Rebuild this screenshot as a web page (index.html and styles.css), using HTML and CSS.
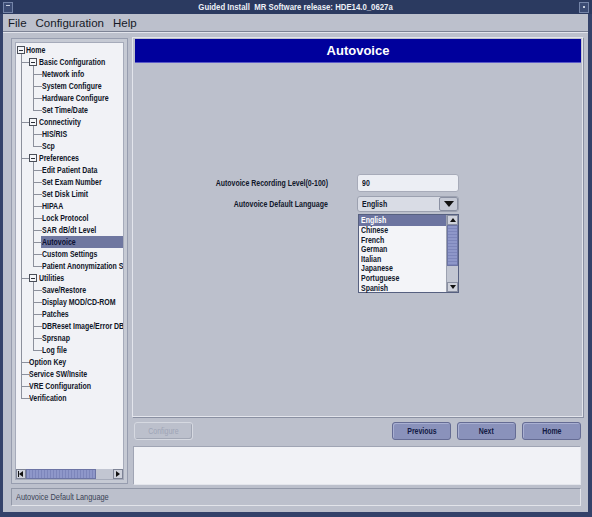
FILE: index.html
```html
<!DOCTYPE html>
<html>
<head>
<meta charset="utf-8">
<title>Guided Install</title>
<link rel="stylesheet" href="styles.css">
</head>
<body>
<div class="window">
  <div class="titlebar">
    <span class="tb-btn tb-menu"></span>
    <span class="tb-title"><span class="n n-c">Guided Install&nbsp; MR Software release: HDE14.0_0627a</span></span>
    <span class="tb-btn tb-max"></span>
  </div>
  <div class="frame">
    <div class="menubar">
      <span class="menu-item">File</span>
      <span class="menu-item">Configuration</span>
      <span class="menu-item">Help</span>
    </div>
    <div class="main">
      <div class="tree-panel">
        <div class="tree-inner">
          <div class="tree-scroll">
            <ul class="tree">
              <li class="root">
                <div class="row"><span class="box"></span><span class="label n">Home</span></div>
                <ul class="lvl1">
                  <li class="branch">
                    <div class="row"><span class="box"></span><span class="label n">Basic Configuration</span></div>
                    <ul class="lvl2">
                      <li><div class="row"><span class="label n">Network info</span></div></li>
                      <li><div class="row"><span class="label n">System Configure</span></div></li>
                      <li><div class="row"><span class="label n">Hardware Configure</span></div></li>
                      <li><div class="row"><span class="label n">Set Time/Date</span></div></li>
                    </ul>
                  </li>
                  <li class="branch">
                    <div class="row"><span class="box"></span><span class="label n">Connectivity</span></div>
                    <ul class="lvl2">
                      <li><div class="row"><span class="label n">HIS/RIS</span></div></li>
                      <li><div class="row"><span class="label n">Scp</span></div></li>
                    </ul>
                  </li>
                  <li class="branch">
                    <div class="row"><span class="box"></span><span class="label n">Preferences</span></div>
                    <ul class="lvl2">
                      <li><div class="row"><span class="label n">Edit Patient Data</span></div></li>
                      <li><div class="row"><span class="label n">Set Exam Number</span></div></li>
                      <li><div class="row"><span class="label n">Set Disk Limit</span></div></li>
                      <li><div class="row"><span class="label n">HIPAA</span></div></li>
                      <li><div class="row"><span class="label n">Lock Protocol</span></div></li>
                      <li><div class="row"><span class="label n">SAR dB/dt Level</span></div></li>
                      <li><div class="row selected"><span class="label n">Autovoice</span></div></li>
                      <li><div class="row"><span class="label n">Custom Settings</span></div></li>
                      <li><div class="row"><span class="label n">Patient Anonymization Settings</span></div></li>
                    </ul>
                  </li>
                  <li class="branch">
                    <div class="row"><span class="box"></span><span class="label n">Utilities</span></div>
                    <ul class="lvl2">
                      <li><div class="row"><span class="label n">Save/Restore</span></div></li>
                      <li><div class="row"><span class="label n">Display MOD/CD-ROM</span></div></li>
                      <li><div class="row"><span class="label n">Patches</span></div></li>
                      <li><div class="row"><span class="label n">DBReset Image/Error DB</span></div></li>
                      <li><div class="row"><span class="label n">Sprsnap</span></div></li>
                      <li><div class="row"><span class="label n">Log file</span></div></li>
                    </ul>
                  </li>
                  <li class="leaf"><div class="row"><span class="label n">Option Key</span></div></li>
                  <li class="leaf"><div class="row"><span class="label n">Service SW/Insite</span></div></li>
                  <li class="leaf"><div class="row"><span class="label n">VRE Configuration</span></div></li>
                  <li class="leaf"><div class="row"><span class="label n">Verification</span></div></li>
                </ul>
              </li>
            </ul>
          </div>
          <div class="hscroll">
            <span class="sb-btn"><span class="tri-left"></span></span>
            <span class="sb-thumb"></span>
            <span class="sb-track"></span>
            <span class="sb-btn"><span class="tri-right"></span></span>
          </div>
        </div>
      </div>
      <div class="right">
        <div class="content">
          <div class="header">Autovoice</div>
          <div class="form">
            <div class="form-row row-level">
              <span class="flabel"><span class="n n-r">Autovoice Recording Level(0-100)</span></span>
              <span class="input"><span class="n">90</span></span>
            </div>
            <div class="form-row row-lang">
              <span class="flabel"><span class="n n-r">Autovoice Default Language</span></span>
              <span class="combo-wrap">
                <span class="combo"><span class="combo-text"><span class="n">English</span></span><span class="combo-btn"><span class="tri-down"></span></span></span>
                <span class="popup">
                  <span class="popup-items">
                    <span class="opt sel"><span class="n">English</span></span>
                    <span class="opt"><span class="n">Chinese</span></span>
                    <span class="opt"><span class="n">French</span></span>
                    <span class="opt"><span class="n">German</span></span>
                    <span class="opt"><span class="n">Italian</span></span>
                    <span class="opt"><span class="n">Japanese</span></span>
                    <span class="opt"><span class="n">Portuguese</span></span>
                    <span class="opt"><span class="n">Spanish</span></span>
                  </span>
                  <span class="vscroll">
                    <span class="vs-btn"><span class="tri-up-s"></span></span>
                    <span class="vs-thumb"></span>
                    <span class="vs-track"></span>
                    <span class="vs-btn"><span class="tri-down-s"></span></span>
                  </span>
                </span>
              </span>
            </div>
          </div>
        </div>
        <div class="buttons">
          <span class="btn disabled"><span class="n n-c">Configure</span></span>
          <span class="spacer"></span>
          <span class="btn"><span class="n n-c">Previous</span></span>
          <span class="btn"><span class="n n-c">Next</span></span>
          <span class="btn"><span class="n n-c">Home</span></span>
        </div>
        <div class="message"></div>
      </div>
    </div>
    <div class="statusbar"><span class="n">Autovoice Default Language</span></div>
  </div>
</div>
</body>
</html>
```
FILE: styles.css
```css
* { box-sizing: border-box; }
html, body { margin: 0; padding: 0; }
body {
  width: 592px;
  height: 517px;
  overflow: hidden;
  font-family: "Liberation Sans", Arial, sans-serif;
  background: #2f3d62;
}
/* narrow text: the original UI uses a condensed Helvetica */
.n {
  display: inline-block;
  white-space: nowrap;
  transform: scaleX(0.82);
  transform-origin: left center;
}
.n-c { transform-origin: center center; }
.n-r { transform-origin: right center; }

.window {
  width: 592px;
  height: 517px;
  background: #34426a;
  padding-bottom: 5px;
}
.titlebar {
  height: 14px;
  display: flex;
  align-items: center;
  padding: 0 3px;
  background: #2b3a60;
}
.tb-btn {
  width: 10px;
  height: 11px;
  border: 1px solid #7484a8;
  background: #3c4c74;
  position: relative;
}
.tb-menu::after {
  content: '';
  position: absolute;
  left: 2px; top: 2px;
  width: 4px; height: 1px;
  background: #c8d0e0;
}
.tb-max::after {
  content: '';
  position: absolute;
  left: 3px; top: 3px;
  width: 2px; height: 2px;
  background: #c8d0e0;
}
.tb-title {
  flex: 1;
  display: flex;
  justify-content: center;
  color: #eef1f7;
  font-weight: bold;
  font-size: 9.5px;
  line-height: 14px;
}
.frame {
  margin: 0 4px 0 3px;
  height: 498px;
  background: #bcc0cc;
  display: flex;
  flex-direction: column;
}
.menubar {
  height: 18px;
  display: flex;
  align-items: center;
  gap: 9px;
  padding-left: 5px;
  border-bottom: 1px solid #7d8395;
  box-shadow: 0 1px 0 #e2e4ec;
  margin-bottom: 1px;
  font-size: 11.5px;
  color: #151926;
}
.main {
  height: 452px;
  display: flex;
  padding: 4px 0 0 8px;
  gap: 4px;
}
/* ---------- tree ---------- */
.tree-panel {
  width: 117px;
  height: 446px;
  margin-top: 1px;
  border: 1px solid #979daf;
  padding: 3px;
  background: #c6cad4;
}
.tree-inner {
  height: 100%;
  border: 1px solid #a6abba;
  background: #f1f2f6;
  display: flex;
  flex-direction: column;
}
.tree-scroll {
  flex: 1;
  overflow: hidden;
  padding-top: 1px;
}
.tree, .tree ul {
  list-style: none;
  margin: 0;
  padding: 0;
}
.row {
  height: 12px;
  display: flex;
  align-items: center;
  white-space: nowrap;
}
.label {
  font-weight: bold;
  font-size: 8.5px;
  color: #0f1526;
  line-height: 12px;
}
.box {
  width: 8px;
  height: 8px;
  border: 1px solid #4a4e58;
  background: #f4f5f8;
  position: relative;
  flex: none;
}
.box::after {
  content: '';
  position: absolute;
  left: 1px; right: 1px; top: 2.5px;
  height: 1px;
  background: #2a2e38;
}
.root > .row { padding-left: 1px; }
.root > .row .label { margin-left: 0.5px; }
.lvl1 > li, .lvl2 > li { position: relative; }
.lvl1 > li::before {
  content: '';
  position: absolute;
  left: 5px; top: 0;
  width: 8px; height: 6px;
  border-left: 1px solid #8c909c;
  border-bottom: 1px solid #8c909c;
}
.lvl1 > li:first-child::before { top: -2px; height: 8px; }
.lvl1 > li:not(:last-child)::after {
  content: '';
  position: absolute;
  left: 5px; top: 6px; bottom: 0;
  border-left: 1px solid #8c909c;
}
.lvl1 > li > .row { padding-left: 13px; }
.lvl1 > li.branch > .row .label { margin-left: 1.5px; }
.lvl2 > li::before {
  content: '';
  position: absolute;
  left: 17px; top: 0;
  width: 8px; height: 6px;
  border-left: 1px solid #8c909c;
  border-bottom: 1px solid #8c909c;
}
.lvl2 > li:first-child::before { top: -2px; height: 8px; }
.lvl2 > li:not(:last-child)::after {
  content: '';
  position: absolute;
  left: 17px; top: 6px; bottom: 0;
  border-left: 1px solid #8c909c;
}
.lvl2 > li > .row { padding-left: 26px; }
.row.selected {
  background: linear-gradient(90deg, transparent 25px, #6f77a0 25px);
}
.row.selected .label { color: #0b1030; }
.hscroll {
  height: 10px;
  display: flex;
  background: #c4c8d4;
}
.sb-btn {
  width: 10px;
  height: 10px;
  border: 1px solid #7e8496;
  background: #cfd2dc;
  display: flex;
  align-items: center;
  justify-content: center;
}
.tri-left {
  width: 0; height: 0;
  border-top: 3.5px solid transparent;
  border-bottom: 3.5px solid transparent;
  border-right: 4px solid #111;
  box-shadow: -1px 0 0 #111;
}
.tri-right {
  width: 0; height: 0;
  border-top: 3.5px solid transparent;
  border-bottom: 3.5px solid transparent;
  border-left: 4px solid #111;
}
.sb-thumb {
  width: 70px;
  height: 10px;
  border: 1px solid #6c74a4;
  background: repeating-linear-gradient(90deg, #8e97c9 0 2px, #7d86bb 2px 3px);
}
.sb-track { flex: 1; background: #c2c6d2; }
/* ---------- right ---------- */
.right {
  width: 451px;
  display: flex;
  flex-direction: column;
}
.content {
  height: 380px;
  border: 1px solid #e3e5ec;
  box-shadow: 1px 1px 0 #8a90a2;
  padding: 1px 1px 0 2px;
}
.header {
  height: 24px;
  background: #00009c;
  border-bottom: 1px solid #5a5ac8;
  color: #ffffff;
  font-weight: bold;
  font-size: 13px;
  line-height: 23px;
  text-align: center;
}
.form {
  margin-top: 111px;
  display: flex;
  flex-direction: column;
  gap: 4px;
}
.form-row {
  display: flex;
  align-items: center;
  padding-left: 66px;
}
.flabel {
  width: 127px;
  display: flex;
  justify-content: flex-end;
  margin-right: 29px;
  font-weight: bold;
  font-size: 8.5px;
  color: #10172a;
  white-space: nowrap;
}
.input {
  width: 102px;
  height: 18px;
  border: 1px solid #a7abb9;
  border-radius: 3px;
  background: #eceef4;
  padding-left: 4px;
  font-weight: bold;
  font-size: 8.5px;
  line-height: 16px;
  color: #10172a;
}
.combo-wrap {
  position: relative;
  width: 102px;
  height: 16px;
}
.combo {
  display: flex;
  align-items: center;
  width: 102px;
  height: 16px;
  border: 1px solid #9ca1b0;
  border-radius: 3px;
  background: #d9dce5;
  padding-left: 4px;
}
.combo-text {
  flex: 1;
  font-weight: bold;
  font-size: 8.5px;
  color: #10172a;
}
.combo-btn {
  width: 19px;
  height: 14px;
  border: 1px solid #8a90a2;
  border-radius: 2px;
  background: #c5c9d5;
  display: flex;
  align-items: center;
  justify-content: center;
}
.tri-down {
  width: 0; height: 0;
  border-left: 5px solid transparent;
  border-right: 5px solid transparent;
  border-top: 6px solid #111;
}
.popup {
  position: absolute;
  left: 1px;
  top: 18px;
  width: 101px;
  height: 79px;
  border: 1px solid #566080;
  background: #f3f4f8;
  display: flex;
}
.popup-items {
  flex: 1;
  display: flex;
  flex-direction: column;
}
.opt {
  height: 9.6px;
  line-height: 9.6px;
  padding-left: 2px;
  font-weight: bold;
  font-size: 8.5px;
  color: #10172a;
}
.opt.sel {
  background: #6c74a0;
  color: #ffffff;
  height: 11px;
  line-height: 11px;
}
.vscroll {
  width: 12px;
  display: flex;
  flex-direction: column;
  background: #c2c6d2;
  border-left: 1px solid #9ca1b0;
}
.vs-btn {
  height: 10px;
  background: #cfd2dc;
  border: 1px solid #8a90a2;
  display: flex;
  align-items: center;
  justify-content: center;
}
.tri-up-s {
  width: 0; height: 0;
  border-left: 3.5px solid transparent;
  border-right: 3.5px solid transparent;
  border-bottom: 4px solid #111;
}
.tri-down-s {
  width: 0; height: 0;
  border-left: 3.5px solid transparent;
  border-right: 3.5px solid transparent;
  border-top: 4px solid #111;
}
.vs-thumb {
  height: 41px;
  border: 1px solid #6c74a4;
  background: repeating-linear-gradient(180deg, #8e97c9 0 2px, #7d86bb 2px 3px);
}
.vs-track { flex: 1; }
.buttons {
  margin-top: 5px;
  height: 18px;
  display: flex;
  gap: 6px;
  padding: 0 2px;
}
.spacer { flex: 1; }
.btn {
  width: 59px;
  height: 18px;
  border: 1px solid #656c94;
  border-radius: 3px;
  background: #8a92bb;
  box-shadow: inset 1px 1px 0 #a9b0d2;
  display: flex;
  justify-content: center;
  font-weight: bold;
  font-size: 8.5px;
  line-height: 16px;
  color: #121a44;
}
.btn.disabled {
  background: #bcc0cc;
  border-color: #d6d9e1;
  box-shadow: inset -1px -1px 0 #a2a7b5;
  color: #9ea4b6;
  font-weight: normal;
}
.message {
  margin: 6px 2px 0 1px;
  height: 39px;
  background: #f1f2f6;
  border: 1px solid #a0a5b4;
  border-right-color: #e4e6ec;
  border-bottom-color: #e4e6ec;
}
.statusbar {
  margin: 3px 7px 0 8px;
  height: 18px;
  border: 1px solid #9298a8;
  border-right-color: #e2e4ea;
  border-bottom-color: #e2e4ea;
  padding-left: 4px;
  font-size: 9px;
  line-height: 16px;
  color: #3a4254;
}
```
